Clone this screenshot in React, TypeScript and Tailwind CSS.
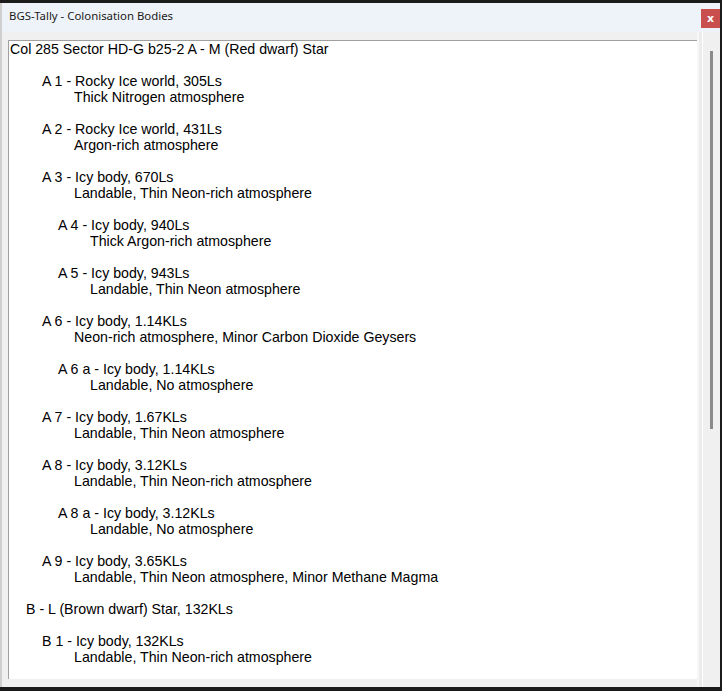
import React from 'react';

type Line = { text: string; indent: number };

// indent is in px from the left edge of the text box
const LINES: (Line | null)[] = [
  { text: 'Col 285 Sector HD-G b25-2 A - M (Red dwarf) Star', indent: 1 },
  null,
  { text: 'A 1 - Rocky Ice world, 305Ls', indent: 33 },
  { text: 'Thick Nitrogen atmosphere', indent: 65 },
  null,
  { text: 'A 2 - Rocky Ice world, 431Ls', indent: 33 },
  { text: 'Argon-rich atmosphere', indent: 65 },
  null,
  { text: 'A 3 - Icy body, 670Ls', indent: 33 },
  { text: 'Landable, Thin Neon-rich atmosphere', indent: 65 },
  null,
  { text: 'A 4 - Icy body, 940Ls', indent: 49 },
  { text: 'Thick Argon-rich atmosphere', indent: 81 },
  null,
  { text: 'A 5 - Icy body, 943Ls', indent: 49 },
  { text: 'Landable, Thin Neon atmosphere', indent: 81 },
  null,
  { text: 'A 6 - Icy body, 1.14KLs', indent: 33 },
  { text: 'Neon-rich atmosphere, Minor Carbon Dioxide Geysers', indent: 65 },
  null,
  { text: 'A 6 a - Icy body, 1.14KLs', indent: 49 },
  { text: 'Landable, No atmosphere', indent: 81 },
  null,
  { text: 'A 7 - Icy body, 1.67KLs', indent: 33 },
  { text: 'Landable, Thin Neon atmosphere', indent: 65 },
  null,
  { text: 'A 8 - Icy body, 3.12KLs', indent: 33 },
  { text: 'Landable, Thin Neon-rich atmosphere', indent: 65 },
  null,
  { text: 'A 8 a - Icy body, 3.12KLs', indent: 49 },
  { text: 'Landable, No atmosphere', indent: 81 },
  null,
  { text: 'A 9 - Icy body, 3.65KLs', indent: 33 },
  { text: 'Landable, Thin Neon atmosphere, Minor Methane Magma', indent: 65 },
  null,
  { text: 'B - L (Brown dwarf) Star, 132KLs', indent: 17 },
  null,
  { text: 'B 1 - Icy body, 132KLs', indent: 33 },
  { text: 'Landable, Thin Neon-rich atmosphere', indent: 65 },
  null,
];

export default function App() {
  return (
    <div className="w-[722px] h-[691px] bg-[#1b1b1b] flex flex-col overflow-hidden">
      <div className="h-[3px] shrink-0" />
      <div className="flex flex-1 min-h-0">
        {/* sliver of desktop behind the window */}
        <div className="w-[2px] bg-[#cfcfcf]" />

        {/* window */}
        <div className="flex-1 flex flex-col min-w-0">
          {/* title bar */}
          <div className="h-[29px] shrink-0 bg-[#eef3f9] flex items-start justify-between">
            <span className="pl-[7px] pt-[5px] text-[11.4px] leading-[16px] text-[#1a1a1a] font-['Noto_Sans',sans-serif]">
              BGS-Tally - Colonisation Bodies
            </span>
            <button className="mt-[6px] w-[19px] h-[19px] bg-[#c94f4f] text-white text-[11px] font-bold leading-none flex items-center justify-center font-['DejaVu_Sans',sans-serif]">
              x
            </button>
          </div>

          {/* body */}
          <div className="flex-1 min-h-0 bg-[#f0f0f0] flex pl-[6px] pt-[8px] pb-[8px]">
            {/* text box */}
            <div className="flex-1 bg-white border-t border-l border-[#a0a0a0] overflow-hidden font-['Liberation_Sans',Arial,sans-serif] text-[14.2px] leading-[16px] text-black">
              {LINES.map((line, i) =>
                line ? (
                  <div key={i} className="h-[16px] whitespace-nowrap" style={{ paddingLeft: line.indent }}>
                    {line.text}
                  </div>
                ) : (
                  <div key={i} className="h-[16px]" />
                ),
              )}
            </div>

            {/* scrollbar */}
            <div className="w-[23px] shrink-0 flex -mt-[8px] -mb-[8px]">
              <div className="w-[2px] bg-[#f7f7f7]" />
              <div className="w-[3px] bg-[#ececec]" />
              <div className="w-px bg-white" />
              <div className="flex-1 bg-[#f0f0f0] flex justify-center pt-[19px]">
                <div className="w-[3px] h-[378px] bg-[#8a8a8a]" />
              </div>
            </div>
          </div>
        </div>

        <div className="w-[2px] bg-[#1b1b1b]" />
      </div>
      <div className="h-[4px] shrink-0" />
    </div>
  );
}
